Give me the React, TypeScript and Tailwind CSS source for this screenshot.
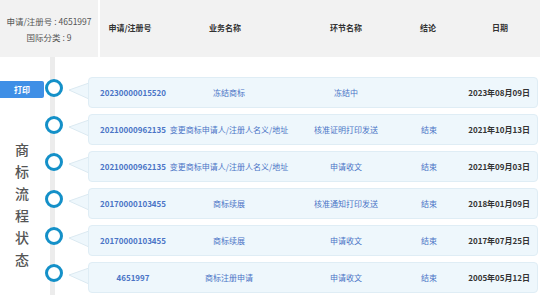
import React from 'react';

const rows = [
  { no: '20230000015520', biz: '冻结商标', step: '冻结中', result: '', date: '2023年08月09日' },
  { no: '20210000962135', biz: '变更商标申请人/注册人名义/地址', step: '核准证明打印发送', result: '结束', date: '2021年10月13日' },
  { no: '20210000962135', biz: '变更商标申请人/注册人名义/地址', step: '申请收文', result: '结束', date: '2021年09月03日' },
  { no: '20170000103455', biz: '商标续展', step: '核准通知打印发送', result: '结束', date: '2018年01月09日' },
  { no: '20170000103455', biz: '商标续展', step: '申请收文', result: '结束', date: '2017年07月25日' },
  { no: '4651997', biz: '商标注册申请', step: '申请收文', result: '结束', date: '2005年05月12日' },
];

const font = { fontFamily: '"Noto Sans CJK SC", "Noto Sans", sans-serif' };

export default function App() {
  return (
    <div className="w-[540px] h-[295px] overflow-hidden bg-white" style={font}>
      {/* 表头 */}
      <div className="flex h-[57px] bg-[#f2f2f2] items-center">
        <div className="w-[100px] h-full shrink-0 flex flex-col items-center justify-center border-r-2 border-white text-[8.5px] leading-[16px] text-[#555]">
          <span>申请/注册号 : 4651997</span>
          <span>国际分类 : 9</span>
        </div>
        <div className="flex items-center text-[8px] font-bold text-[#333] pb-[2px]">
          <div className="w-[60px] text-center">申请/注册号</div>
          <div className="w-[130px] text-center">业务名称</div>
          <div className="w-[112px] text-center">环节名称</div>
          <div className="w-[52px] text-center">结论</div>
          <div className="w-[80px] ml-[6px] text-center">日期</div>
        </div>
      </div>

      {/* 流程 */}
      <div className="flex">
        <div className="w-[44px] shrink-0 flex flex-col items-center">
          <div className="mt-[24px] h-[17px] w-[44px] bg-[#3f8fe6] rounded-r-[2px] flex items-center justify-center text-white text-[8px] font-bold">
            打印
          </div>
          <div className="mt-[40px] flex flex-col items-center text-[14px] leading-[22px] font-medium text-[#555]">
            {'商标流程状态'.split('').map((c, i) => (
              <span key={i}>{c}</span>
            ))}
          </div>
        </div>

        <div className="w-[20px] shrink-0 pt-[20px] flex flex-col gap-[6px] bg-[linear-gradient(to_right,transparent_6px,#ececec_6px,#ececec_11px,transparent_11px)] h-[238px]">
          {rows.map((r, i) => (
            <div key={i} className="h-[31px] flex justify-center">
              <div className="mt-[2px] w-[18px] h-[18px] rounded-full border-[3px] border-[#1490c8] bg-white" />
            </div>
          ))}
        </div>

        <div className="flex-1 pt-[20px] flex flex-col gap-[6px] pr-[2px]">
          {rows.map((r, i) => (
            <div key={i} className="flex h-[31px]">
              <div className="w-[25px] shrink-0">
                <svg width="25" height="31" viewBox="0 0 25 31">
                  <polygon points="25,6 5,13 25,22" fill="#eef7fc" />
                  <polyline points="25,6 5,13 25,22" fill="none" stroke="#dbe9f1" strokeWidth="1" />
                </svg>
              </div>
              <div className="-ml-[1px] flex-1 flex items-center rounded-[4px] bg-[#eef7fc] border border-[#dfedf5] text-[8px] text-[#4a74c6]">
                <div className="w-[88px] shrink-0 text-center font-semibold">{r.no}</div>
                <div className="w-[104px] shrink-0 flex justify-center whitespace-nowrap">{r.biz}</div>
                <div className="w-[130px] shrink-0 text-center">{r.step}</div>
                <div className="w-[36px] shrink-0 text-center">{r.result}</div>
                <div className="flex-1 text-right pr-[7px] font-bold text-[#333]">{r.date}</div>
              </div>
            </div>
          ))}
        </div>
      </div>
    </div>
  );
}
